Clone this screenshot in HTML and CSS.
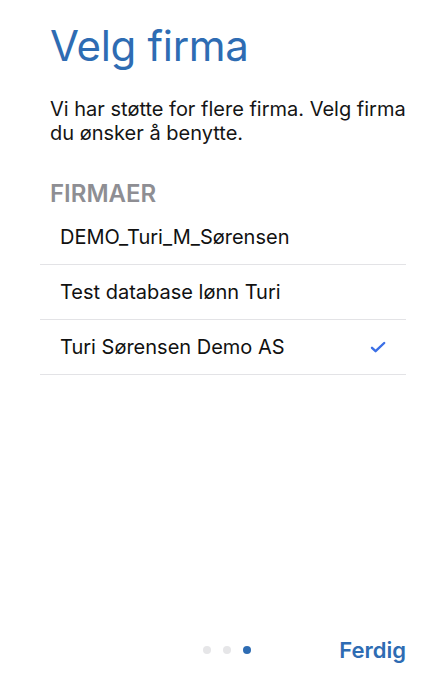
FILE: index.html
```html
<!DOCTYPE html>
<html>
  <head>
    <title>Velg firma</title>
    <link rel="stylesheet" href="styles.css">
  </head>
  <body>
    <main class="page">
      <h1 class="title">Velg firma</h1>
      <p class="intro">Vi har støtte for flere firma. Velg firma du ønsker å benytte.</p>
      <section class="companies">
        <h2 class="section-label">FIRMAER</h2>
        <ul class="company-list">
          <li class="company">DEMO_Turi_M_Sørensen</li>
          <li class="company">Test database lønn Turi</li>
          <li class="company selected">
            Turi Sørensen Demo AS
            <svg class="check" width="16" height="12" viewBox="0 0 16 12">
              <path d="M2 6.8 L5.6 10.2 L14.2 2" fill="none" stroke="currentColor" stroke-width="2.4" stroke-linecap="round" stroke-linejoin="round"/>
            </svg>
          </li>
        </ul>
      </section>
      <footer class="footer">
        <div class="dots">
          <span class="dot"></span>
          <span class="dot"></span>
          <span class="dot active"></span>
        </div>
        <button class="done">Ferdig</button>
      </footer>
    </main>
  </body>
</html>
```
FILE: styles.css
```css
* { box-sizing: border-box; }
html, body { margin: 0; height: 100%; background: #fff; }
body { font-family: Inter, "Liberation Sans", sans-serif; color: #111; }

.page {
  height: 100%;
  display: flex;
  flex-direction: column;
  padding: 0 36px 0 50px;
}

.title {
  margin: 21px 0 0;
  font-size: 42px;
  font-weight: 400;
  line-height: 50px;
  color: #2e6cb3;
  letter-spacing: -0.3px;
}

.intro {
  margin: 26px 0 0;
  font-size: 20px;
  line-height: 24px;
  color: #151515;
}

.companies { margin-top: 35px; }

.section-label {
  margin: 0;
  font-size: 24px;
  font-weight: 600;
  line-height: 28px;
  color: #8e8e93;
}

.company-list {
  list-style: none;
  margin: 2px 4px 0 -10px;
  padding: 0;
}

.company {
  display: flex;
  align-items: center;
  justify-content: space-between;
  height: 55px;
  padding: 0 20px;
  font-size: 20px;
  border-bottom: 1px solid #e3e3e6;
}

.check { color: #3b6fe6; }

.footer {
  margin-top: auto;
  height: 74px;
  display: flex;
  align-items: center;
  justify-content: flex-end;
  position: relative;
  margin-right: 4px;
}

.dots {
  position: absolute;
  left: 153px;
  display: flex;
  gap: 12px;
}
.dot {
  width: 8px;
  height: 8px;
  border-radius: 50%;
  background: #e6e6e8;
}
.dot.active { background: #2e6cb3; }

.done {
  border: 0;
  background: none;
  padding: 0;
  font-family: inherit;
  font-size: 22px;
  font-weight: 600;
  color: #2e6cb3;
}
```
